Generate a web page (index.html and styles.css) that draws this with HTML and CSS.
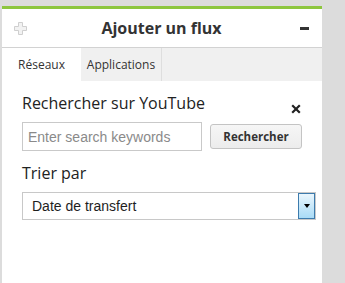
FILE: index.html
```html
<!DOCTYPE html>
<html lang="fr">
<head>
  <meta charset="UTF-8" />
  <title>Ajouter un flux</title>
  <link rel="stylesheet" href="styles.css">
</head>
<body>

  <div class="panel">
    <!-- En-tête -->
    <div class="panel-header">
      <svg class="icon-plus" width="13" height="13" viewBox="0 0 13 13">
        <path d="M4.5 0.5h4v4h4v4h-4v4h-4v-4h-4v-4h4z" fill="#f2f2f2" stroke="#cfcfcf" stroke-width="1"/>
      </svg>
      <h1>Ajouter un flux</h1>
      <span class="icon-minus"></span>
    </div>

    <!-- Onglets -->
    <div class="tabs">
      <div class="tab active">Réseaux</div>
      <div class="tab">Applications</div>
    </div>

    <div class="content">
      <div class="content-title">
        <h2>Rechercher sur YouTube</h2>
        <svg class="icon-close" width="10" height="10" viewBox="0 0 10 10">
          <path d="M1.2 1.2L8.8 8.8M8.8 1.2L1.2 8.8" stroke="#222" stroke-width="2.2"/>
        </svg>
      </div>

      <div class="search-row">
        <input type="text" class="search-input" placeholder="Enter search keywords">
        <button class="search-btn">Rechercher</button>
      </div>

      <label class="sort-label">Trier par</label>
      <div class="select">
        <span class="select-value">Date de transfert</span>
        <span class="select-arrow"></span>
      </div>
    </div>
  </div>

</body>
</html>
```

FILE: styles.css
```css
* {
  box-sizing: border-box;
}

body {
  margin: 0;
  padding: 6px 0 0 2px;
  background: #dcdcdc;
  font-family: 'Open Sans', sans-serif;
  color: #222;
  height: 283px;
  overflow: hidden;
}

.panel {
  width: 320px;
  min-height: 277px;
  background: #fff;
  border-top: 3px solid #8dc63f;
}

.panel-header {
  height: 39px;
  display: grid;
  grid-template-columns: 1fr auto 1fr;
  align-items: center;
  padding: 0 13px 0 12px;
  border-bottom: 1px solid #d2d2d2;
}

.icon-plus {
  justify-self: start;
}

.panel-header h1 {
  margin: 0;
  font-size: 16px;
  font-weight: 700;
  color: #333;
  line-height: 22px;
}

.icon-minus {
  justify-self: end;
  width: 9px;
  height: 3px;
  background: #333;
}

.tabs {
  display: flex;
  height: 33px;
  background: #f0f0f0;
}

.tab {
  display: flex;
  align-items: center;
  justify-content: center;
  font-size: 12px;
  color: #333;
}

.tab:first-child {
  width: 79px;
}

.tab:last-child {
  width: 81px;
  border-right: 1px solid #dedede;
}

.tab.active {
  background: #fff;
}

.content {
  padding: 11px 6px 0 20px;
}

.content-title {
  display: flex;
  justify-content: space-between;
  align-items: flex-end;
  padding-right: 15px;
}

.content-title h2 {
  margin: 0;
  font-size: 16px;
  font-weight: 400;
  line-height: 22px;
}

.search-row {
  display: flex;
  align-items: center;
  gap: 8px;
  margin-top: 8px;
}

.search-input {
  width: 180px;
  height: 29px;
  padding: 0 5px;
  border: 1px solid #c9c9c9;
  font-family: 'Liberation Sans', Arial, sans-serif;
  font-size: 14px;
  color: #222;
}

.search-input::placeholder {
  color: #8a8a8a;
}

.search-btn {
  width: 92px;
  height: 25px;
  padding: 0;
  border: 1px solid #c4c4c4;
  border-radius: 3px;
  background: linear-gradient(#f6f6f6, #ececec);
  font-family: 'Open Sans', sans-serif;
  font-size: 11.5px;
  font-weight: 700;
  color: #333;
}

.sort-label {
  display: block;
  margin-top: 11px;
  font-size: 16px;
  line-height: 22px;
}

.select {
  display: flex;
  align-items: stretch;
  width: 294px;
  height: 28px;
  margin-top: 8px;
  border: 1px solid #c8c8c8;
}

.select-value {
  flex: 1;
  display: flex;
  align-items: center;
  padding-left: 9px;
  font-family: 'Liberation Sans', Arial, sans-serif;
  font-size: 14px;
  color: #1e1e1e;
}

.select-arrow {
  width: 17px;
  display: flex;
  align-items: center;
  justify-content: center;
  border: 1px solid #3d7bad;
  background: linear-gradient(#eaf6fd, #a9dbf6);
}

.select-arrow::after {
  content: "";
  border-left: 3.5px solid transparent;
  border-right: 3.5px solid transparent;
  border-top: 4px solid #000;
}
```
